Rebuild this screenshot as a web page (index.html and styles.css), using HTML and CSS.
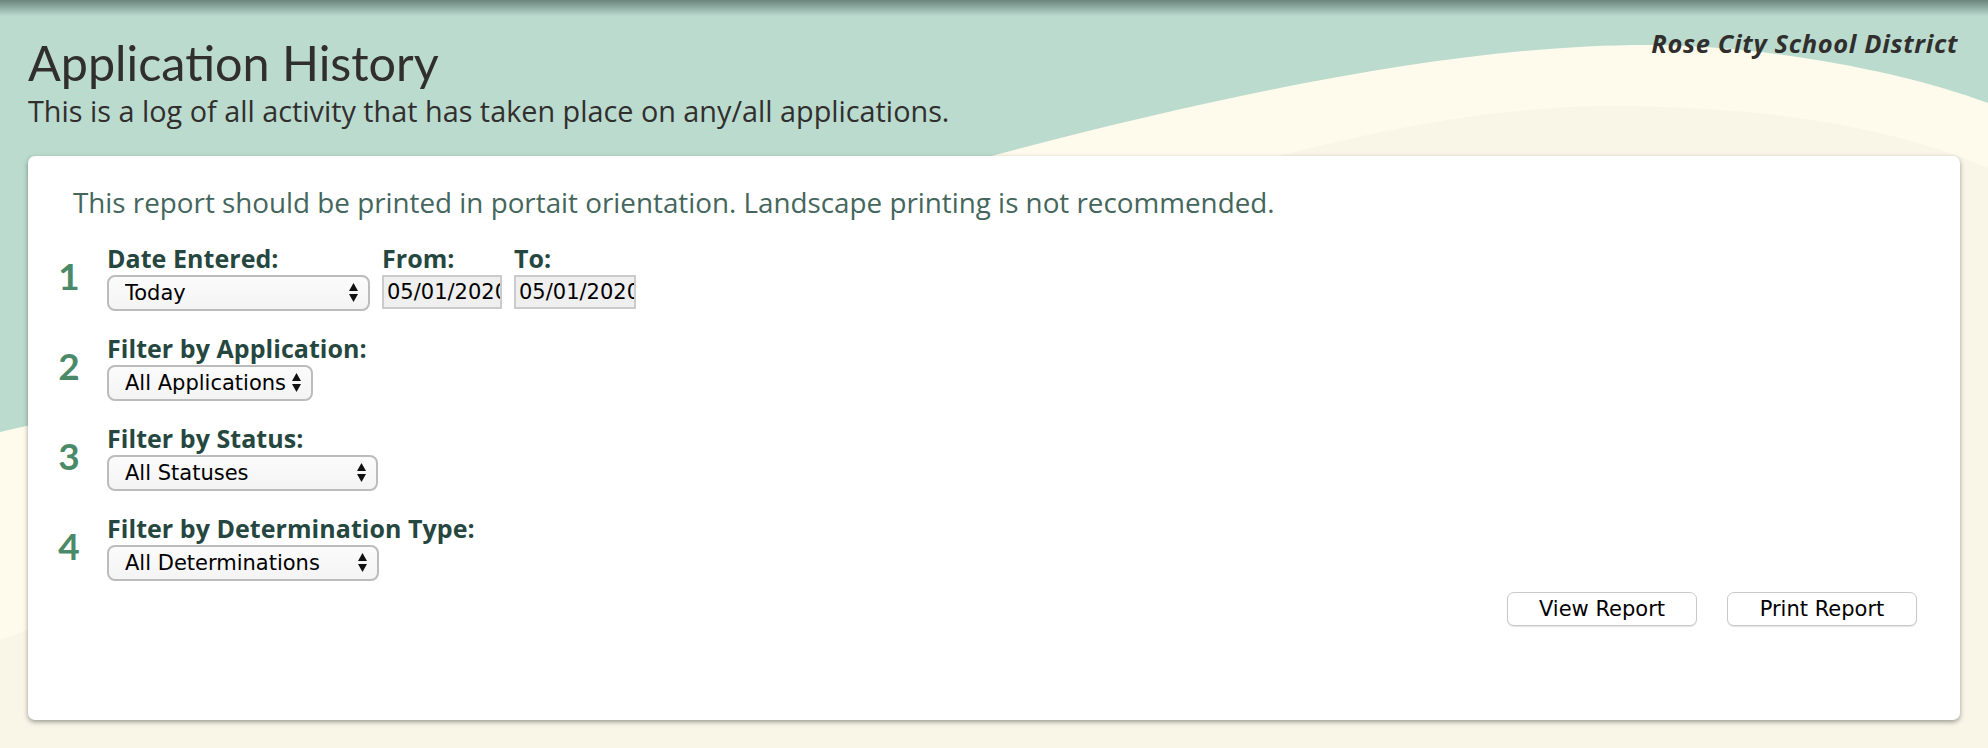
FILE: index.html
```html
<!DOCTYPE html>
<html lang="en">
<head>
<meta charset="utf-8">
<title>Application History</title>
<link rel="stylesheet" href="styles.css">
</head>
<body>
<svg class="bg" viewBox="0 0 1988 748" preserveAspectRatio="none" aria-hidden="true">
  <path class="wave1" d="M0,432 C500,320 1200,45 1647,45 C1760,45 1900,70 1988,103 L1988,748 L0,748 Z"/>
  <path class="wave2" d="M0,640 C600,420 1200,106 1610,106 C1780,106 1900,130 1988,168 L1988,748 L0,748 Z"/>
</svg>
<div class="topshade"></div>
<div class="page">
  <header class="header">
    <div class="titles">
      <h1 class="title">Application History</h1>
      <p class="subtitle">This is a log of all activity that has taken place on any/all applications.</p>
    </div>
    <div class="district">Rose City School District</div>
  </header>
  <main class="card">
    <p class="note">This report should be printed in portait orientation. Landscape printing is not recommended.</p>
    <div class="steps">
      <div class="step">
        <div class="num">1</div>
        <div class="fields">
          <div class="field">
            <label class="label">Date Entered:</label>
            <div class="sel sel-date">
              <select class="select"><option>Today</option></select>
              <svg class="arrows" viewBox="0 0 9 19"><path d="M0,8 L4.5,0 L9,8 Z M0,11 L4.5,19 L9,11 Z"/></svg>
            </div>
          </div>
          <div class="field">
            <label class="label">From:</label>
            <input class="date date-from" type="text" value="05/01/2020" readonly>
          </div>
          <div class="field">
            <label class="label">To:</label>
            <input class="date date-to" type="text" value="05/01/2020" readonly>
          </div>
        </div>
      </div>
      <div class="step">
        <div class="num">2</div>
        <div class="fields">
          <div class="field">
            <label class="label">Filter by Application:</label>
            <div class="sel sel-app">
              <select class="select"><option>All Applications</option></select>
              <svg class="arrows" viewBox="0 0 9 19"><path d="M0,8 L4.5,0 L9,8 Z M0,11 L4.5,19 L9,11 Z"/></svg>
            </div>
          </div>
        </div>
      </div>
      <div class="step">
        <div class="num">3</div>
        <div class="fields">
          <div class="field">
            <label class="label">Filter by Status:</label>
            <div class="sel sel-status">
              <select class="select"><option>All Statuses</option></select>
              <svg class="arrows" viewBox="0 0 9 19"><path d="M0,8 L4.5,0 L9,8 Z M0,11 L4.5,19 L9,11 Z"/></svg>
            </div>
          </div>
        </div>
      </div>
      <div class="step">
        <div class="num">4</div>
        <div class="fields">
          <div class="field">
            <label class="label">Filter by Determination Type:</label>
            <div class="sel sel-det">
              <select class="select"><option>All Determinations</option></select>
              <svg class="arrows" viewBox="0 0 9 19"><path d="M0,8 L4.5,0 L9,8 Z M0,11 L4.5,19 L9,11 Z"/></svg>
            </div>
          </div>
        </div>
      </div>
    </div>
    <div class="actions">
      <button class="btn" type="button">View Report</button>
      <button class="btn" type="button">Print Report</button>
    </div>
  </main>
</div>
</body>
</html>
```

FILE: styles.css
```css
html, body {
  margin: 0;
  padding: 0;
}
body {
  position: relative;
  width: 1988px;
  height: 748px;
  overflow: hidden;
  background: #bbdbcf;
  font-family: "Open Sans", Lato, sans-serif;
  color: #333131;
}
.bg {
  position: absolute;
  left: 0;
  top: 0;
  width: 100%;
  height: 100%;
  z-index: 0;
}
.wave1 { fill: #fffbec; }
.wave2 { fill: #f9f6e8; }
.topshade {
  position: absolute;
  left: 0;
  top: 0;
  width: 100%;
  height: 16px;
  background: linear-gradient(rgba(40, 60, 55, 0.55), rgba(40, 60, 55, 0));
  z-index: 1;
}
.page {
  position: relative;
  z-index: 2;
}
.header {
  display: flex;
  justify-content: space-between;
  align-items: flex-start;
  padding: 28px 30px 0 28px;
}
.title {
  margin: 6px 0 0;
  font-family: Lato, "Open Sans", sans-serif;
  font-size: 48.5px;
  font-weight: 400;
  line-height: 56px;
  color: #312f2e;
}
.subtitle {
  margin: 5px 0 0;
  font-size: 28.8px;
  line-height: 32px;
  color: #312f2e;
}
.district {
  font-size: 25.5px;
  font-weight: 700;
  font-style: italic;
  letter-spacing: 0.65px;
  line-height: 30px;
  color: #312f2e;
}
.card {
  display: block;
  margin: 29px 28px 0;
  height: 564px;
  box-sizing: border-box;
  padding: 30px 43px 0 24px;
  background: #ffffff;
  border-radius: 7px;
  box-shadow: 0 2px 5px rgba(0, 0, 0, 0.38);
}
.note {
  margin: 0;
  padding-left: 21px;
  font-size: 27.8px;
  line-height: 32px;
  color: #44665c;
}
.steps {
  margin-top: 28px;
  display: flex;
  flex-direction: column;
  gap: 25px;
}
.step {
  display: flex;
  align-items: center;
}
.num {
  width: 34px;
  margin: 0 21px 7px 0;
  text-align: center;
  font-family: Lato, "Open Sans", sans-serif;
  font-size: 37px;
  font-weight: 700;
  line-height: 37px;
  color: #4b8a69;
}
.fields {
  display: flex;
  gap: 12px;
}
.field {
  display: flex;
  flex-direction: column;
}
.label {
  display: block;
  margin-bottom: 5px;
  font-size: 25px;
  font-weight: 700;
  letter-spacing: 0.05px;
  line-height: 24px;
  color: #25473f;
  white-space: nowrap;
}
.sel {
  position: relative;
  height: 36px;
}
.select {
  appearance: none;
  -webkit-appearance: none;
  width: 100%;
  height: 36px;
  box-sizing: border-box;
  margin: 0;
  padding: 0 4px 0 16px;
  border: 2px solid #bcbcbc;
  border-radius: 8px;
  background: linear-gradient(#fbfbfb, #f4f4f4);
  font-family: "DejaVu Sans", sans-serif;
  font-size: 21px;
  color: #000000;
}
.arrows {
  position: absolute;
  right: 12px;
  top: 8px;
  width: 9px;
  height: 19px;
  fill: #111111;
  pointer-events: none;
}
.sel-date { width: 263px; }
.sel-app { width: 206px; }
.sel-status { width: 271px; }
.sel-det { width: 272px; }
.date {
  height: 34px;
  box-sizing: border-box;
  margin: 0;
  padding: 0 0 0 3px;
  border: 2px solid #cbcbcb;
  background: #efefef;
  font-family: "DejaVu Sans", sans-serif;
  font-size: 21px;
  color: #000000;
  outline: none;
}
.date-from { width: 120px; }
.date-to { width: 122px; }
.actions {
  margin-top: 11px;
  display: flex;
  justify-content: flex-end;
  gap: 30px;
}
.btn {
  width: 190px;
  height: 34px;
  box-sizing: border-box;
  margin: 0;
  padding: 0;
  border: 1px solid #cacaca;
  border-radius: 7px;
  background: #ffffff;
  box-shadow: 0 1px 1px rgba(0, 0, 0, 0.12);
  font-family: "DejaVu Sans", sans-serif;
  font-size: 21px;
  color: #000000;
}
```
